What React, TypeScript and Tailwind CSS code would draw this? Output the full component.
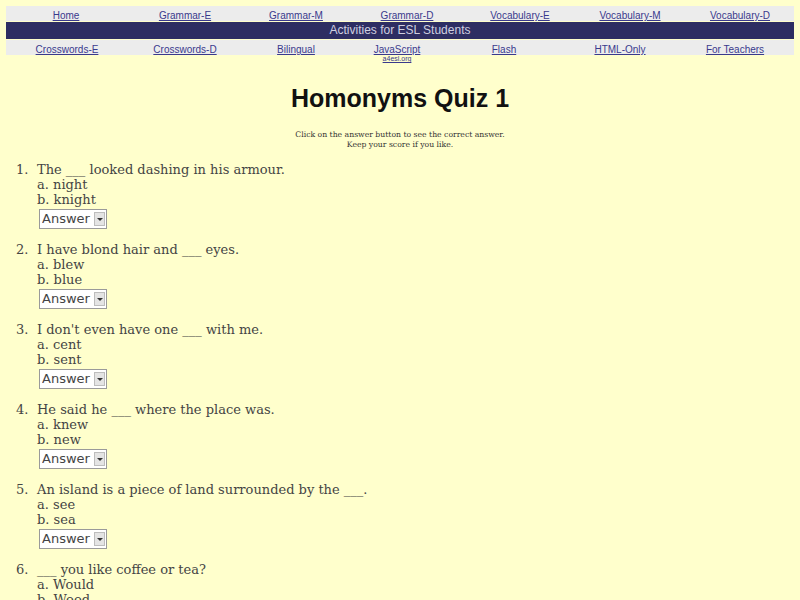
import React from 'react';

const TOP_LINKS = ['Home', 'Grammar-E', 'Grammar-M', 'Grammar-D', 'Vocabulary-E', 'Vocabulary-M', 'Vocabulary-D'];
const BOTTOM_LINKS = ['Crosswords-E', 'Crosswords-D', 'Bilingual', 'JavaScript', 'Flash', 'HTML-Only', 'For Teachers'];

const QUESTIONS = [
  { q: 'The ___ looked dashing in his armour.', a: 'night', b: 'knight' },
  { q: 'I have blond hair and ___ eyes.', a: 'blew', b: 'blue' },
  { q: "I don't even have one ___ with me.", a: 'cent', b: 'sent' },
  { q: 'He said he ___ where the place was.', a: 'knew', b: 'new' },
  { q: 'An island is a piece of land surrounded by the ___.', a: 'see', b: 'sea' },
  { q: '___ you like coffee or tea?', a: 'Would', b: 'Wood' },
];

function NavRow({ links, cols }: { links: string[]; cols: string }) {
  return (
    <div className={`grid ${cols} bg-[#ececec] h-[15px] items-center`}>
      {links.map((l) => (
        <div key={l} className="text-center leading-[15px]">
          <a href="#" className="text-[#3a3a8c] underline text-[10px]">{l}</a>
        </div>
      ))}
    </div>
  );
}

function AnswerSelect() {
  return (
    <div className="relative inline-block mt-[2px] ml-[2px]">
      <select className="appearance-none w-[68px] h-[20px] bg-white border border-[#9a9a9a] pl-[2px] text-[13px] text-[#444] leading-[18px] font-['DejaVu_Sans',sans-serif]">
        <option>Answer</option>
        <option>a</option>
        <option>b</option>
      </select>
      <span className="absolute right-[2px] top-[3px] w-[11px] h-[14px] bg-[#e4e4e4] border border-[#bdbdbd] flex items-center justify-center pointer-events-none">
        <span className="w-0 h-0 border-l-[3px] border-r-[3px] border-t-[3px] border-l-transparent border-r-transparent border-t-[#333]" />
      </span>
    </div>
  );
}

export default function App() {
  return (
    <div className="h-[600px] bg-[#ffffcc] pt-[6px] font-['Liberation_Sans',Arial,sans-serif] overflow-hidden">
      <div className="mx-[6px]">
        <NavRow links={TOP_LINKS} cols="grid-cols-[120px_118px_104px_118px_108px_112px_108px]" />
        <div className="bg-[#2e2e62] h-[17px] my-[1px] text-center text-[#d0d0e0] text-[12px] leading-[17px]">
          Activities for ESL Students
        </div>
        <NavRow links={BOTTOM_LINKS} cols="grid-cols-[122px_114px_108px_94px_120px_112px_118px]" />
        <div className="text-center text-[7px] leading-[8px] pr-[6px]">
          <a href="#" className="text-[#3a3a8c] underline">a4esl.org</a>
        </div>
      </div>

      <h1 className="text-center mt-[20px] text-[25px] leading-[30px] font-bold text-[#111] font-['Liberation_Sans',Arial,sans-serif]">
        Homonyms Quiz 1
      </h1>

      <div className="text-center mt-[17px] text-[7.7px] leading-[10px] text-[#333] font-['DejaVu_Serif',serif]">
        Click on the answer button to see the correct answer.
        <br />
        Keep your score if you like.
      </div>

      <ol className="pl-[16px] mt-[12px] text-[13px] leading-[15px] text-[#444] font-['DejaVu_Serif',serif]">
        {QUESTIONS.map((item, i) => (
          <li key={i} className="flex mb-[13px]">
            <span className="w-[21px] shrink-0">{i + 1}.</span>
            <div>
              <div>{item.q}</div>
              <div>a. {item.a}</div>
              <div>b. {item.b}</div>
              <AnswerSelect />
            </div>
          </li>
        ))}
      </ol>
    </div>
  );
}
